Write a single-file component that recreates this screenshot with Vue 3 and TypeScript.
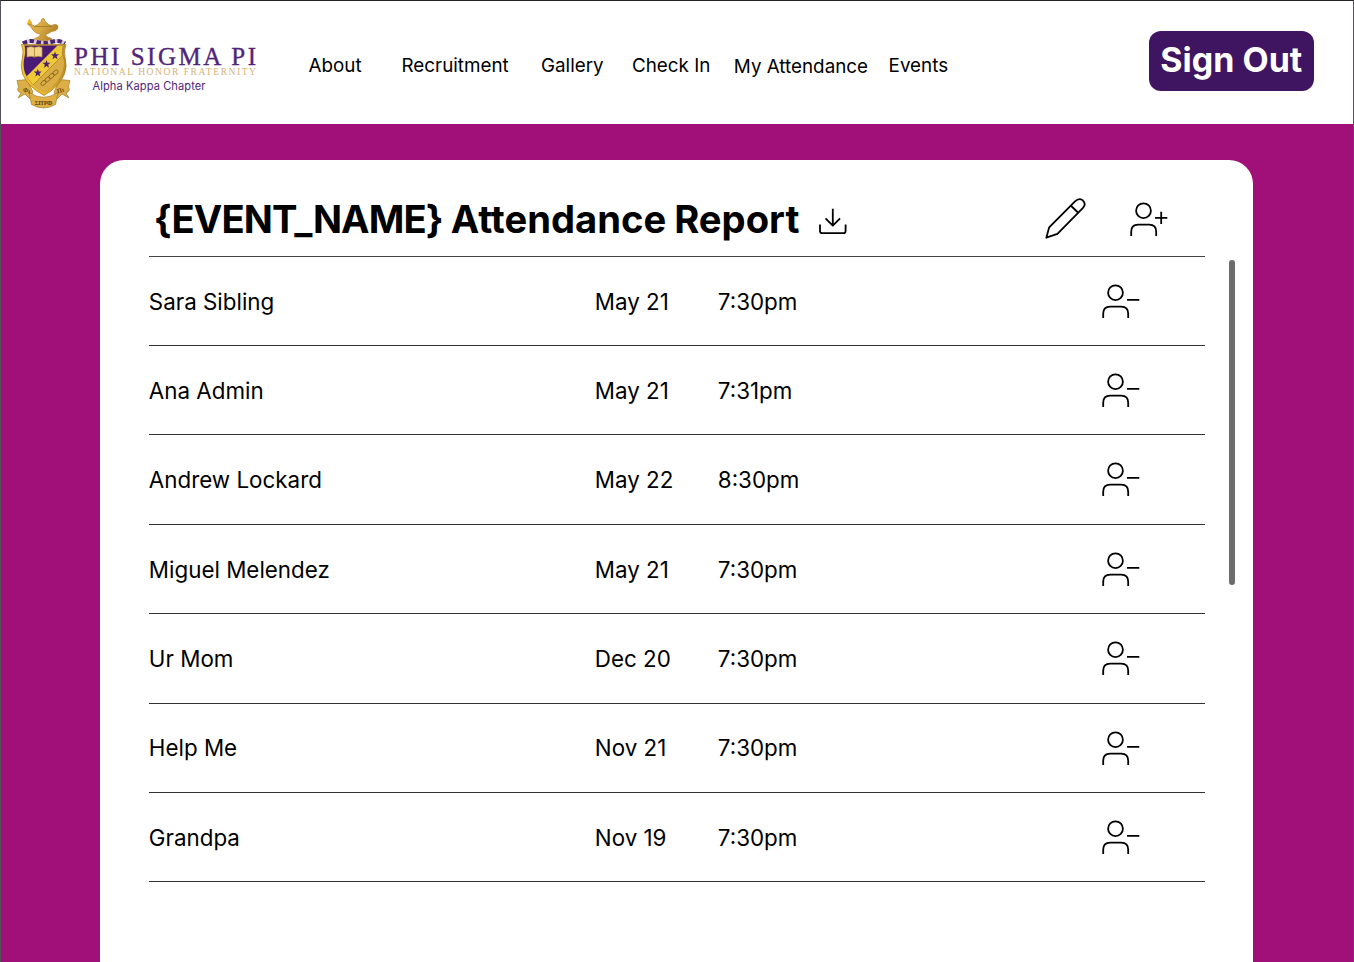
<script setup lang="ts">
interface NavItem {
  label: string
  key: string
}

interface Attendee {
  name: string
  date: string
  time: string
}

const nav: NavItem[] = [
  { label: 'About', key: 'about' },
  { label: 'Recruitment', key: 'recruitment' },
  { label: 'Gallery', key: 'gallery' },
  { label: 'Check In', key: 'check-in' },
  { label: 'My Attendance', key: 'my-attendance' },
  { label: 'Events', key: 'events' },
]

const attendees: Attendee[] = [
  { name: 'Sara Sibling', date: 'May 21', time: '7:30pm' },
  { name: 'Ana Admin', date: 'May 21', time: '7:31pm' },
  { name: 'Andrew Lockard', date: 'May 22', time: '8:30pm' },
  { name: 'Miguel Melendez', date: 'May 21', time: '7:30pm' },
  { name: 'Ur Mom', date: 'Dec 20', time: '7:30pm' },
  { name: 'Help Me', date: 'Nov 21', time: '7:30pm' },
  { name: 'Grandpa', date: 'Nov 19', time: '7:30pm' },
]
</script>

<template>
  <div class="page">
    <header class="header">
      <svg class="logo" viewBox="0 0 250 100" width="250" height="100" role="img" aria-label="Phi Sigma Pi">
        <defs>
          <linearGradient id="gold" x1="0" x2="1" y1="0" y2="0.4">
            <stop offset="0" stop-color="#d9ab3a" />
            <stop offset="0.5" stop-color="#d8ab45" />
            <stop offset="1" stop-color="#b48428" />
          </linearGradient>
          <linearGradient id="rim" x1="0" x2="1" y1="0" y2="0">
            <stop offset="0" stop-color="#f0c52c" />
            <stop offset="0.6" stop-color="#e3b22c" />
            <stop offset="1" stop-color="#b98a22" />
          </linearGradient>
          <clipPath id="shield-clip">
            <path d="M14.500 35.500 H53 Q51.500 41 53 47 Q55 56 52 63 Q47 75 34 82 Q20 75 15 63 Q12.500 56 14.500 47 Q16 41 14.500 35.500 Z" />
          </clipPath>
        </defs>
        <!-- lamp -->
        <path d="M17.500 14 Q17 11 20 8.500 Q20 11 22 12 Q22.500 14 21 15 Z" fill="#f2b51f" />
        <path d="M17.500 14 Q22 14 24.500 16 Q28 15 30 12.500 Q32 11 31.500 9.500 Q33 7 34.500 9.500 Q34 11 36.500 12.500 Q38.500 15 41.500 15.500 Q47 13 48 16.500 Q48 21 41.500 21.500 Q38 24 35.500 24.500 Q36 27 41.500 28.500 V31.500 H24.500 V28.500 Q30 27 30.500 24.500 Q25 23 23 20 Q21 16.500 17.500 14 Z" fill="url(#gold)" stroke="#a67b1d" stroke-width="0.600" />
        <path d="M24.500 16.500 H42" stroke="#94701c" stroke-width="0.700" />
        <!-- mantle -->
        <path d="M13 33.500 Q19 29.500 26.500 32 Q34 34 41 32 Q49 29.500 55 33.500" fill="none" stroke="#d9c8dc" stroke-width="4" />
        <path d="M13 33.500 Q19 29.500 26.500 32 Q34 34 41 32 Q49 29.500 55 33.500" fill="none" stroke="#4b2472" stroke-width="4" stroke-dasharray="4.500 2.500" />
        <!-- ribbon -->
        <path d="M7 70.500 L17 69.500 L23 82 L20 89 L15 84 L8 88 L11 83 Q6 81 8.500 77 Z" fill="#dcae48" stroke="#94701f" stroke-width="0.600" />
        <path d="M60 70.500 L50 69.500 L44 82 L47 89 L52 84 L59 88 L56 83 Q61 81 58.500 77 Z" fill="#dcae48" stroke="#94701f" stroke-width="0.600" />
        <path d="M19 82.500 Q33.500 92 48 82.500 L45.500 94.500 Q33.500 101.500 21.500 94.500 Z" fill="#e0b044" stroke="#94701f" stroke-width="0.600" />
        <!-- shield -->
        <path d="M11.500 34.500 H56 Q53.500 41 55 47 Q57.500 56 54.500 64 Q49 77 34 85.500 Q18 77 12.500 64 Q10 56 12.500 47 Q14 41 11.500 34.500 Z" fill="url(#rim)" stroke="#a57a17" stroke-width="0.700" />
        <g clip-path="url(#shield-clip)">
          <rect x="12" y="35" width="44" height="51" fill="#4a1b76" />
          <path d="M58 25 L12 71 V90 H60 V25 Z" fill="#f0c936" />
          <path d="M58 40 L12 86 L60 90 Z" fill="#dbad45" />
          <path d="M58 40 L12 86" stroke="#a87c20" stroke-width="0.700" />
          <path d="M17 37.500 Q21 36 24.500 37.500 Q29 36 32 37.500 V47 Q28 45.500 24.500 47 Q21 45.500 17 47 Z" fill="#f2d48c" stroke="#c29530" stroke-width="0.700" />
          <path d="M24.500 37.500 V47" stroke="#a27b22" stroke-width="0.700" />
          <path d="M45 41.500 l1 2.700 3 .1 -2.300 1.900 .8 3 -2.500-1.700 -2.500 1.700 .8-3 -2.300-1.900 3-.1z" fill="#4a2472" />
          <path d="M36.500 50 l1 2.700 3 .1 -2.300 1.900 .8 3 -2.500-1.700 -2.500 1.700 .8-3 -2.300-1.900 3-.1z" fill="#4a2472" />
          <path d="M27.800 58.800 l1 2.700 3 .1 -2.300 1.900 .8 3 -2.500-1.700 -2.500 1.700 .8-3 -2.300-1.900 3-.1z" fill="#4a2472" />
          <g fill="none" stroke="#8d681b" stroke-width="0.900">
            <ellipse cx="33.500" cy="73" rx="3" ry="2" transform="rotate(-42 33.500 73)" />
            <ellipse cx="37.500" cy="69.500" rx="3" ry="2" transform="rotate(-42 37.500 69.500)" />
            <ellipse cx="41.500" cy="66" rx="3" ry="2" transform="rotate(-42 41.500 66)" />
            <ellipse cx="45.500" cy="62.500" rx="3" ry="2" transform="rotate(-42 45.500 62.500)" />
          </g>
        </g>
        <text class="motto" x="24.500" y="94.500" textLength="18">ΣΙΤΡΦ</text>
        <text class="motto" x="16" y="82.500" text-anchor="middle" transform="rotate(15 16 82.500)">Φι</text>
        <text class="motto" x="51" y="82.500" text-anchor="middle" transform="rotate(-15 51 82.500)">Πι</text>

        <text class="wordmark" x="64" y="54.600" textLength="182">PHI SIGMA PI</text>
        <text class="tagline" x="64" y="65.400" textLength="182">NATIONAL HONOR FRATERNITY</text>
        <text class="chapter" x="82.500" y="79.600" textLength="113">Alpha Kappa Chapter</text>
      </svg>

      <nav class="nav">
        <a v-for="item in nav" :key="item.key" class="nav-link" :class="item.key">{{ item.label }}</a>
      </nav>

      <button class="sign-out" type="button">Sign Out</button>
    </header>

    <main class="main">
      <section class="card">
        <div class="report">
          <div class="title-bar">
            <h1 class="title"><span class="event">{EVENT_NAME}</span> Attendance Report</h1>
            <svg class="icon download" viewBox="0 0 30 30" width="30" height="30">
              <path d="M2 16.500 V23 Q2 25.200 4.200 25.200 H25.400 Q27.600 25.200 27.600 23 V16.500 M14.800 0.700 V17.300 M7.500 10.300 L14.800 17.600 L22.100 10.300" />
            </svg>
            <svg class="icon pencil" viewBox="0 0 42 42" width="42" height="42">
              <path d="M2.300 39.700 L5.200 29.300 L31 3.300 C34.300 0.200 37.400 0.700 39 2.600 C41.300 5.100 41 7.800 39 9.900 L13.400 35.800 Z M26.700 7.500 L34.500 15" />
            </svg>
            <svg class="icon add" viewBox="0 0 40 36" width="40" height="36">
              <circle cx="14.500" cy="9.700" r="7.400" />
              <path d="M2.200 35 V30.700 Q2.200 23.700 9.200 23.700 H20.200 Q27.200 23.700 27.200 30.700 V35 M26 16.800 H38.300 M32.200 10.800 V23" />
            </svg>
          </div>

          <ul class="rows">
            <li v-for="person in attendees" :key="person.name" class="row">
              <span class="name">{{ person.name }}</span>
              <span class="date">{{ person.date }}</span>
              <span class="time">{{ person.time }}</span>
              <svg class="icon remove" viewBox="0 0 40 36" width="40" height="36">
                <circle cx="14.500" cy="9.700" r="7.400" />
                <path d="M2.200 35 V30.700 Q2.200 23.700 9.200 23.700 H20.200 Q27.200 23.700 27.200 30.700 V35 M26 16.800 H38.300" />
              </svg>
            </li>
          </ul>
        </div>
        <div class="scroll-thumb"></div>
      </section>
    </main>
  </div>
</template>

<style>
body {
  overflow: hidden;
}
</style>

<style scoped>
.page {
  box-sizing: border-box;
  display: flex;
  flex-direction: column;
  width: 1354px;
  height: 962px;
  border: 1px solid #55505a;
  border-top-color: #222;
  border-bottom: 0;
  background: #fff;
  color: #000;
  font-family: Inter, "Liberation Sans", sans-serif;
}

.header {
  display: flex;
  flex: none;
  align-items: flex-start;
  height: 123.300px;
}

.logo {
  flex: none;
  margin: 9px 0 0 9px;
}

.motto {
  fill: #69470e;
  font: bold 6.500px "Liberation Serif", serif;
}

.wordmark {
  fill: #512579;
  font: 25px "Liberation Serif", serif;
  stroke: #512579;
  stroke-width: 0.35px;
}

.tagline {
  fill: #d3b377;
  font: 9.600px "Liberation Serif", serif;
}

.chapter {
  fill: #512579;
  font: 11.100px Inter, sans-serif;
}

.nav {
  display: grid;
  grid-template-columns: 93px 139.500px 91px 101.800px 154.800px 70px;
  flex: none;
  margin: 53px 0 0 48.500px;
}

.nav-link {
  font-size: 18.820px;
  line-height: 24px;
  white-space: nowrap;
}

.my-attendance {
  padding-top: 1px;
}

.sign-out {
  flex: none;
  width: 164.500px;
  height: 59.500px;
  margin: 30.200px 39.500px 0 auto;
  padding: 0 0 2px;
  border: 0;
  border-radius: 12px;
  background: #3f1562;
  color: #fff;
  font: 700 34px/57.500px Inter, sans-serif;
  white-space: nowrap;
}

.main {
  display: flex;
  flex: 1;
  padding: 35.700px 0 0 98.800px;
  background: #a11079;
}

.card {
  display: flex;
  box-sizing: border-box;
  width: 1153px;
  padding: 0 0 0 49px;
  border-radius: 24px 24px 0 0;
  background: #fff;
}

.report {
  width: 1056px;
}

.title-bar {
  display: flex;
  box-sizing: border-box;
  height: 97px;
  border-bottom: 1px solid #444;
}

.title {
  width: 665px;
  margin: 35px 0 0 5px;
  font-size: 38.200px;
  font-weight: 700;
  line-height: 48px;
  white-space: nowrap;
  word-spacing: -1px;
}

.event {
  letter-spacing: -0.9px;
}

.icon {
  flex: none;
  fill: none;
  stroke: #000;
  stroke-width: 1.8;
  stroke-linejoin: round;
}

.download {
  margin: 48px 0 0 -1px;
}

.pencil {
  margin: 38px 0 0 196.500px;
}

.add {
  margin: 41px 0 0 42.500px;
}

.rows {
  margin: 0;
  padding: 0;
  list-style: none;
}

.row {
  display: grid;
  grid-template-columns: 446px 123px 383px 104px;
  box-sizing: border-box;
  height: 89px;
  border-bottom: 1px solid #333;
  font-size: 22.380px;
  line-height: 30px;
}

.row:nth-child(3),
.row:nth-child(5) {
  height: 90px;
}

.row span {
  padding-top: 30px;
}

.row:nth-child(6) span {
  padding-top: 29px;
}

.remove {
  margin-top: 26px;
}

.scroll-thumb {
  width: 6px;
  height: 325px;
  margin: 99.900px 0 0 24px;
  border-radius: 3px;
  background: #6f6c6c;
}
</style>
